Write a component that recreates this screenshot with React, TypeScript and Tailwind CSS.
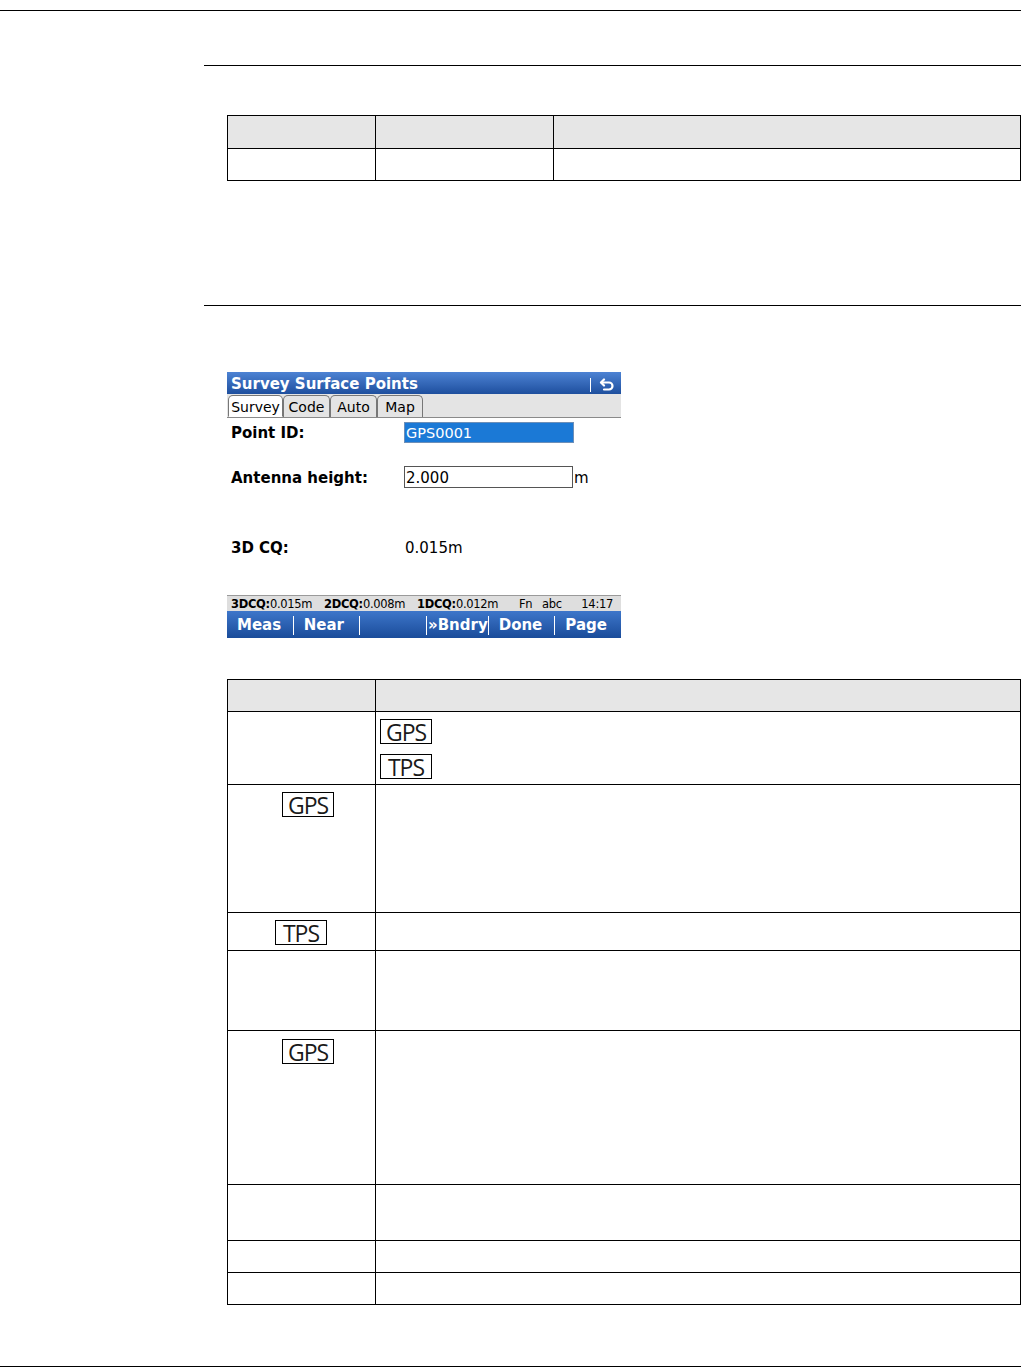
import React from "react";

const dev = { fontFamily: '"DejaVu Sans", Verdana, sans-serif' };
const key = { fontFamily: '"Open Sans", "Noto Sans", sans-serif' };

function KeyBox({ label, className = "" }: { label: string; className?: string }) {
  return (
    <span
      style={key}
      className={`inline-flex h-[25px] w-[52px] items-center justify-center border border-black pt-[1px] text-[23px] font-medium leading-none tracking-[-1px] text-[#1a1a1a] ${className}`}
    >
      {label}
    </span>
  );
}

function BackIcon() {
  return (
    <svg width="16" height="14" viewBox="0 0 16 14" fill="none" stroke="white" strokeWidth="2.2" strokeLinecap="round" strokeLinejoin="round">
      <path d="M5 1.5 2 4.5l3 3" />
      <path d="M2.5 4.5H10a3.5 3.5 0 0 1 0 7H5" />
    </svg>
  );
}

function Tab({ label, active, w }: { label: string; active?: boolean; w: string }) {
  return (
    <div
      className={`${w} flex h-[22px] items-center justify-center rounded-t-[5px] border border-[#777] pt-[2px] text-[14px] text-black ${
        active ? "border-b-transparent bg-white" : "border-b-0 bg-[#e4e4e4]"
      }`}
    >
      {label}
    </div>
  );
}

function Device() {
  const keys = ["Meas", "Near", "", "»Bndry", "Done", "Page"];
  return (
    <div style={dev} className="flex w-[394px] flex-col">
      <div className="flex h-[22px] items-center justify-between bg-gradient-to-b from-[#4d83d4] to-[#1e4f9e] pl-[4px] pr-[6px] pt-[3px]">
        <span className="text-[15px] font-bold text-white">Survey Surface Points</span>
        <div className="flex items-center gap-[8px]">
          <span className="h-[14px] w-px bg-white" />
          <BackIcon />
        </div>
      </div>
      <div className="flex h-[24px] items-end border-b border-[#8a8a8a] bg-[#e4e4e4] pl-[1px]">
        <Tab label="Survey" active w="w-[55px]" />
        <Tab label="Code" w="w-[47px]" />
        <Tab label="Auto" w="w-[47px]" />
        <Tab label="Map" w="w-[46px]" />
      </div>
      <div className="flex h-[177px] flex-col bg-white">
        <div className="mt-[4px] flex h-[21px] items-center">
          <span className="w-[177px] pl-[4px] pt-[2px] text-[15px] font-bold text-black">Point ID:</span>
          <span className="flex h-[21px] w-[170px] items-center border border-[#6d8fb8] bg-[#1b79d6] pl-px pt-[2px] text-[14.5px] text-white">GPS0001</span>
        </div>
        <div className="mt-[23px] flex h-[22px] items-center">
          <span className="w-[177px] pl-[4px] pt-[2px] text-[15px] font-bold text-black">Antenna height:</span>
          <span className="flex h-[22px] w-[169px] items-center border border-[#555] bg-white pl-px pt-[2px] text-[15px] text-black">2.000</span>
          <span className="pl-px pt-[2px] text-[15px] text-black">m</span>
        </div>
        <div className="mt-[48px] flex h-[22px] items-center">
          <span className="w-[178px] pl-[4px] pt-[2px] text-[15px] font-bold text-black">3D CQ:</span>
          <span className="pt-[2px] text-[15px] text-black">0.015m</span>
        </div>
      </div>
      <div className="flex h-[16px] items-center border-t border-[#9a9a9a] bg-[#dedede] pl-[4px] pr-[8px] pt-[2px] text-[11.5px] leading-none tracking-[-0.3px] text-black">
        <span className="w-[93px]"><b>3DCQ:</b>0.015m</span>
        <span className="w-[93px]"><b>2DCQ:</b>0.008m</span>
        <span className="w-[102px]"><b>1DCQ:</b>0.012m</span>
        <span className="w-[23px]">Fn</span>
        <span>abc</span>
        <span className="ml-auto">14:17</span>
      </div>
      <div className="flex h-[27px] items-center bg-gradient-to-b from-[#3d76ca] to-[#1a4c9a] pt-[2px]">
        {keys.map((k, i) => (
          <div key={i} className={`flex h-[19px] flex-1 items-center ${i > 0 ? "border-l border-white" : ""} ${k.startsWith("»") ? "pl-[1px]" : "pl-[10px]"}`}>
            <span className="text-[15px] font-bold text-white">{k}</span>
          </div>
        ))}
      </div>
    </div>
  );
}

function Row({ h, first, children, header }: { h: string; first?: boolean; children: React.ReactNode; header?: boolean }) {
  return (
    <div className={`flex ${h} ${first ? "" : "border-t border-black"} ${header ? "bg-[#e6e6e6]" : ""}`}>{children}</div>
  );
}

export default function App() {
  return (
    <div className="flex h-[1367px] w-full flex-col bg-white">
      <div className="mt-[10px] h-px w-full bg-black" />
      <div className="ml-[204px] mt-[54px] h-px bg-black" />

      <div className="ml-[227px] mt-[49px] border border-black">
        <Row h="h-[32px]" first header>
          <div className="w-[147px]" />
          <div className="w-[178px] border-l border-black" />
          <div className="flex-1 border-l border-black" />
        </Row>
        <Row h="h-[32px]">
          <div className="w-[147px]" />
          <div className="w-[178px] border-l border-black" />
          <div className="flex-1 border-l border-black" />
        </Row>
      </div>

      <div className="ml-[204px] mt-[124px] h-px bg-black" />

      <div className="ml-[227px] mt-[66px]">
        <Device />
      </div>

      <div className="ml-[227px] mt-[41px] border border-black">
        <Row h="h-[31px]" first header>
          <div className="w-[147px]" />
          <div className="flex-1 border-l border-black" />
        </Row>
        <Row h="h-[73px]">
          <div className="w-[147px]" />
          <div className="flex flex-1 flex-col gap-[10px] border-l border-black pl-[4px] pt-[7px]">
            <KeyBox label="GPS" />
            <KeyBox label="TPS" />
          </div>
        </Row>
        <Row h="h-[128px]">
          <div className="w-[147px] pl-[54px] pt-[7px]">
            <KeyBox label="GPS" />
          </div>
          <div className="flex-1 border-l border-black" />
        </Row>
        <Row h="h-[38px]">
          <div className="w-[147px] pl-[47px] pt-[7px]">
            <KeyBox label="TPS" />
          </div>
          <div className="flex-1 border-l border-black" />
        </Row>
        <Row h="h-[80px]">
          <div className="w-[147px]" />
          <div className="flex-1 border-l border-black" />
        </Row>
        <Row h="h-[154px]">
          <div className="w-[147px] pl-[54px] pt-[8px]">
            <KeyBox label="GPS" />
          </div>
          <div className="flex-1 border-l border-black" />
        </Row>
        <Row h="h-[56px]">
          <div className="w-[147px]" />
          <div className="flex-1 border-l border-black" />
        </Row>
        <Row h="h-[32px]">
          <div className="w-[147px]" />
          <div className="flex-1 border-l border-black" />
        </Row>
        <Row h="h-[32px]">
          <div className="w-[147px]" />
          <div className="flex-1 border-l border-black" />
        </Row>
      </div>

      <div className="mt-auto h-px w-full bg-black" />
    </div>
  );
}
